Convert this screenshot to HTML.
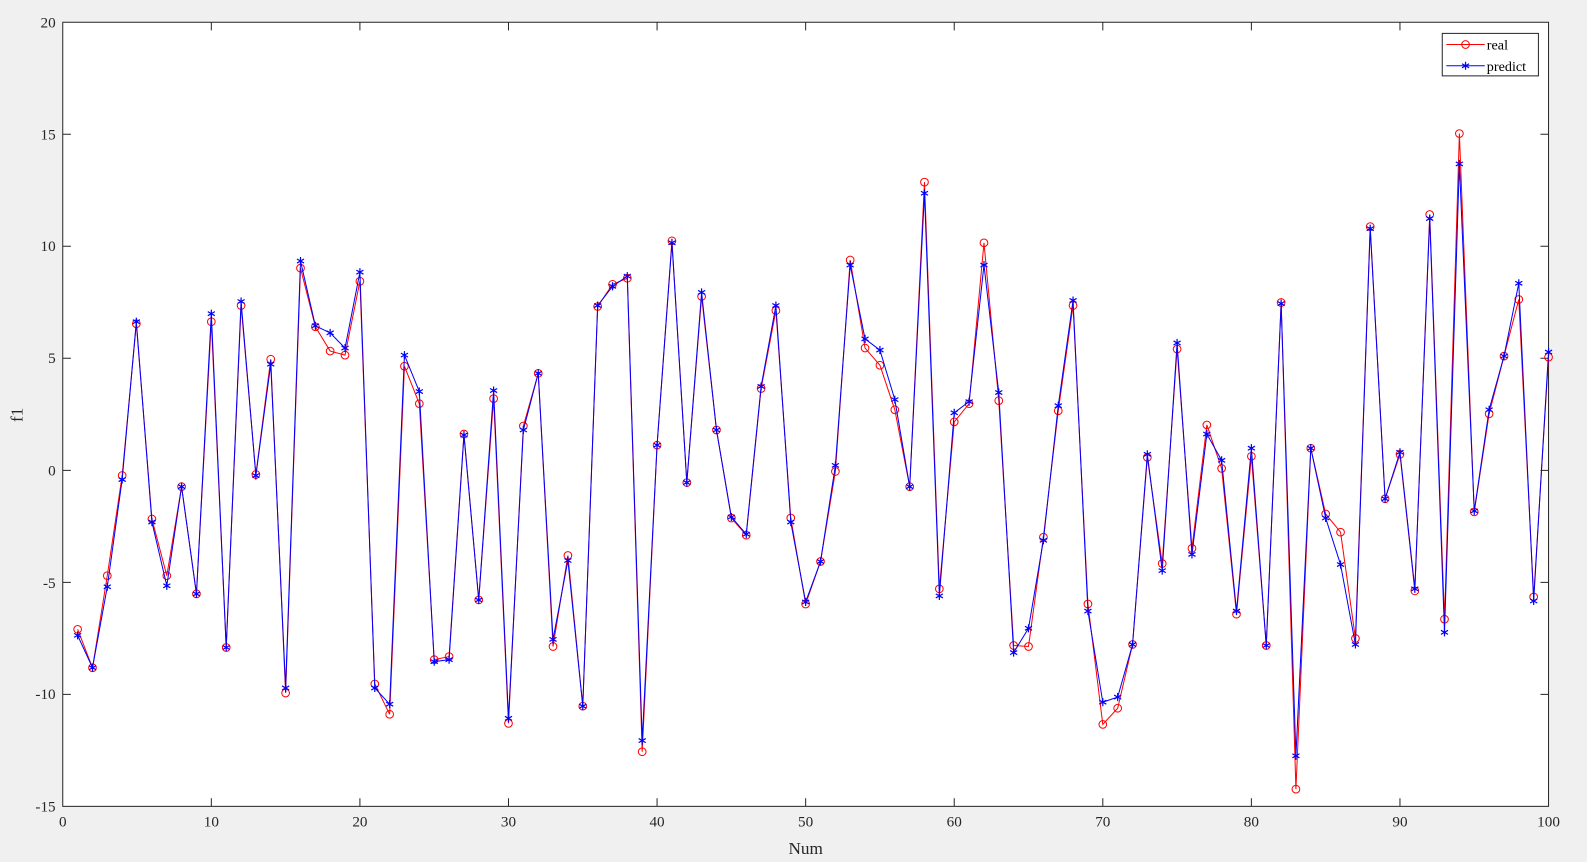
<!DOCTYPE html>
<html><head><style>html,body{margin:0;padding:0;background:#f0f0f0;}svg{display:block}</style></head>
<body>
<svg width="1587" height="862" viewBox="0 0 1568 852" preserveAspectRatio="none" xmlns="http://www.w3.org/2000/svg" font-family="Liberation Serif, serif" font-size="15">
<defs>
<marker id="c" markerWidth="10" markerHeight="10" refX="5" refY="5" markerUnits="userSpaceOnUse"><circle cx="5" cy="5" r="3.8" fill="none" stroke="#f00" stroke-width="1"/></marker>
<marker id="s" markerWidth="12" markerHeight="12" refX="6" refY="6" markerUnits="userSpaceOnUse"><path d="M6 2V10M2.5 4L9.5 8M2.5 8L9.5 4" stroke="#00f" stroke-width="1.2" fill="none"/></marker>
</defs>
<rect x="62" y="22" width="1468" height="775" fill="#fff" stroke="#262626" stroke-width="1"/>
<g stroke="#262626" stroke-width="1">
<path d="M208.8 797v-8M355.6 797v-8M502.4 797v-8M649.2 797v-8M796 797v-8M942.8 797v-8M1089.6 797v-8M1236.4 797v-8M1383.2 797v-8M208.8 22v8M355.6 22v8M502.4 22v8M649.2 22v8M796 22v8M942.8 22v8M1089.6 22v8M1236.4 22v8M1383.2 22v8"/>
<path d="M62 132.7h8M62 243.4h8M62 354.1h8M62 464.9h8M62 575.6h8M62 686.3h8M1530 132.7h-8M1530 243.4h-8M1530 354.1h-8M1530 464.9h-8M1530 575.6h-8M1530 686.3h-8"/>
</g>
<g fill="#262626" text-anchor="middle">
<text x="62" y="817">0</text><text x="208.8" y="817">10</text><text x="355.6" y="817">20</text><text x="502.4" y="817">30</text><text x="649.2" y="817">40</text><text x="796" y="817">50</text><text x="942.8" y="817">60</text><text x="1089.6" y="817">70</text><text x="1236.4" y="817">80</text><text x="1383.2" y="817">90</text><text x="1530" y="817">100</text>
<text x="796" y="844" font-size="17">Num</text>
</g>
<g fill="#262626" text-anchor="end">
<text x="55" y="27">20</text><text x="55" y="138">15</text><text x="55" y="248">10</text><text x="55" y="359">5</text><text x="55" y="470">0</text><text x="55" y="581">-5</text><text x="55" y="691">-10</text><text x="55" y="802">-15</text>
</g>
<text x="22" y="410" font-size="17" fill="#262626" text-anchor="middle" transform="rotate(-90 22 410)">f1</text>
<polyline fill="none" stroke="#f00" stroke-width="1" marker-start="url(#c)" marker-mid="url(#c)" marker-end="url(#c)" points="76.7,622 91.4,660 106,569 120.7,470 134.7,320 150.1,513 164.8,569 179.4,481 194.1,587 208.8,318 223.5,640 238.2,302 252.8,469 267.5,355 282.2,685 296.9,265 311.6,323 326.2,347 340.9,351 355.6,278 370.3,676 385,706 399.6,362 414.3,399 429,652 443.7,649 458.4,429 473,593 487.7,394 502.4,715 517.1,421 531.8,369 546.4,639 561.1,549 575.8,698 590.5,303 605.2,281 619.8,275 634.5,743 649.2,440 663.9,238 678.6,477 693.2,293 707.9,425 722.6,512 737.3,529 752,384 766.6,307 781.3,512 796,597 810.7,555 825.4,466 840,257 854.7,344 869.4,361 884.1,405 898.8,481 913.4,180 928.1,582 942.8,417 957.5,399 972.2,240 986.8,396 1001.5,638 1016.2,639 1030.9,531 1045.6,406 1060.2,302 1074.9,597 1089.6,716 1104.3,700 1119,637 1133.6,452 1148.3,557 1163,345 1177.7,542 1192.4,420 1207,463 1221.7,607 1236.4,451 1251.1,638 1265.8,299 1280.4,780 1295.1,443 1309.8,508 1324.5,526 1339.2,631 1353.8,224 1368.5,493 1383.2,449 1397.9,584 1412.6,212 1427.2,612 1441.9,132 1456.6,506 1471.3,409 1486,352 1500.6,296 1515.3,590 1530,353"/>
<polyline fill="none" stroke="#00f" stroke-width="1" marker-start="url(#s)" marker-mid="url(#s)" marker-end="url(#s)" points="76.7,628 91.4,660 106,580 120.7,474 134.7,318 150.1,516 164.8,579 179.4,481 194.1,587 208.8,310 223.5,640 238.2,298 252.8,470 267.5,360 282.2,680 296.9,258 311.6,322 326.2,329 340.9,344 355.6,269 370.3,680 385,696 399.6,351 414.3,387 429,654 443.7,652 458.4,430 473,593 487.7,386 502.4,710 517.1,425 531.8,369 546.4,632 561.1,554 575.8,698 590.5,302 605.2,283 619.8,273 634.5,732 649.2,440 663.9,240 678.6,477 693.2,289 707.9,425 722.6,511 737.3,528 752,382 766.6,302 781.3,516 796,595 810.7,555 825.4,460 840,262 854.7,335 869.4,346 884.1,395 898.8,481 913.4,191 928.1,589 942.8,408 957.5,397 972.2,262 986.8,388 1001.5,645 1016.2,621 1030.9,534 1045.6,401 1060.2,297 1074.9,604 1089.6,694 1104.3,689 1119,637 1133.6,449 1148.3,564 1163,339 1177.7,548 1192.4,429 1207,455 1221.7,604 1236.4,443 1251.1,638 1265.8,300 1280.4,747 1295.1,443 1309.8,512 1324.5,558 1339.2,637 1353.8,226 1368.5,493 1383.2,447 1397.9,582 1412.6,216 1427.2,625 1441.9,162 1456.6,505 1471.3,405 1486,352 1500.6,280 1515.3,594 1530,348"/>
<rect x="1425" y="33" width="95" height="42" fill="#fff" stroke="#262626" stroke-width="1"/>
<line x1="1429" y1="44" x2="1467" y2="44" stroke="#f00"/><circle cx="1448" cy="44" r="3.8" fill="none" stroke="#f00"/>
<line x1="1429" y1="65" x2="1467" y2="65" stroke="#00f"/><path d="M1448 61V69M1444.5 63L1451.5 67M1444.5 67L1451.5 63" stroke="#00f" stroke-width="1.2"/>
<text x="1469" y="49" fill="#000" font-size="14">real</text>
<text x="1469" y="70" fill="#000" font-size="14">predict</text>
</svg>
</body></html>
